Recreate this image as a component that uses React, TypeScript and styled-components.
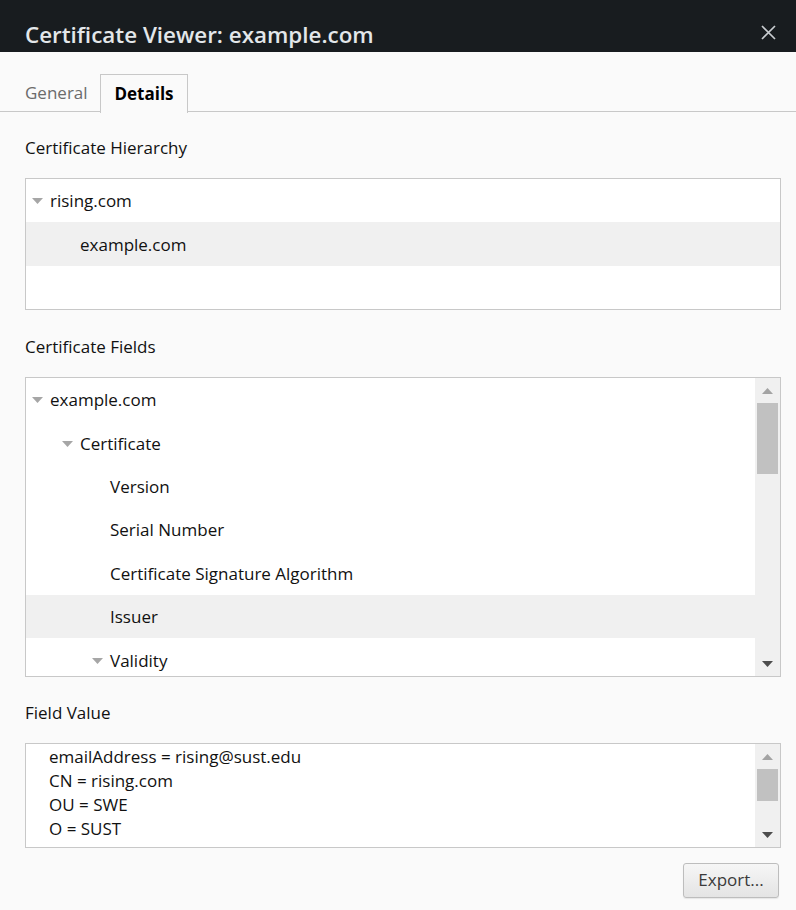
import styled, { createGlobalStyle } from 'styled-components';

const GlobalStyle = createGlobalStyle`
  html, body {
    margin: 0;
    padding: 0;
    background: #fafafa;
  }
  body {
    font-family: 'Open Sans', 'Noto Sans', sans-serif;
    color: #111;
  }
  * {
    box-sizing: border-box;
  }
`;

interface TreeItem {
  label: string;
  level: number;
  expanded?: boolean;
  selected?: boolean;
}

const hierarchy: TreeItem[] = [
  { label: 'rising.com', level: 0, expanded: true },
  { label: 'example.com', level: 1, selected: true },
];

const fields: TreeItem[] = [
  { label: 'example.com', level: 0, expanded: true },
  { label: 'Certificate', level: 1, expanded: true },
  { label: 'Version', level: 2 },
  { label: 'Serial Number', level: 2 },
  { label: 'Certificate Signature Algorithm', level: 2 },
  { label: 'Issuer', level: 2, selected: true },
  { label: 'Validity', level: 2, expanded: true },
];

const valueLines = [
  'emailAddress = rising@sust.edu',
  'CN = rising.com',
  'OU = SWE',
  'O = SUST',
  'L = Sylhet',
];

function Arrow({ up, color }: { up?: boolean; color: string }) {
  return (
    <svg width="11" height="6" viewBox="0 0 11 6">
      <path d={up ? 'M0 6 L5.5 0 L11 6 Z' : 'M0 0 L11 0 L5.5 6 Z'} fill={color} />
    </svg>
  );
}

function Tree({ items }: { items: TreeItem[] }) {
  return (
    <Rows>
      {items.map((item, i) => (
        <Row key={i} $level={item.level} $selected={item.selected}>
          <Twisty>{item.expanded && <Arrow color="#a6a6a6" />}</Twisty>
          {item.label}
        </Row>
      ))}
    </Rows>
  );
}

function Scrollbar({ thumb }: { thumb: number }) {
  return (
    <ScrollTrack>
      <ScrollButton>
        <Arrow up color="#a3a3a3" />
      </ScrollButton>
      <Thumb style={{ height: thumb }} />
      <ScrollSpacer />
      <ScrollButton>
        <Arrow color="#4d4d4d" />
      </ScrollButton>
    </ScrollTrack>
  );
}

export default function App() {
  return (
    <Dialog>
      <GlobalStyle />
      <TitleBar>
        <Title>Certificate Viewer: example.com</Title>
        <CloseButton aria-label="Close">
          <svg width="15" height="15" viewBox="0 0 15 15">
            <path d="M1 1 L14 14 M14 1 L1 14" stroke="#c9cdd1" strokeWidth="1.7" />
          </svg>
        </CloseButton>
      </TitleBar>

      <TabStrip>
        <Tab>General</Tab>
        <Tab $active>Details</Tab>
      </TabStrip>

      <Content>
        <SectionLabel $top={24}>Certificate Hierarchy</SectionLabel>
        <ListBox $height={132}>
          <Tree items={hierarchy} />
        </ListBox>

        <SectionLabel $top={25}>Certificate Fields</SectionLabel>
        <ListBox $height={300}>
          <Tree items={fields} />
          <Scrollbar thumb={71} />
        </ListBox>

        <SectionLabel $top={24}>Field Value</SectionLabel>
        <ListBox $height={105}>
          <ValueText>
            {valueLines.map((line) => (
              <ValueLine key={line}>{line}</ValueLine>
            ))}
          </ValueText>
          <Scrollbar thumb={32} />
        </ListBox>

        <Footer>
          <ExportButton>Export...</ExportButton>
        </Footer>
      </Content>
    </Dialog>
  );
}

const Dialog = styled.div`
  width: 796px;
  min-height: 910px;
  display: flex;
  flex-direction: column;
  background: #fafafa;
`;

const TitleBar = styled.header`
  height: 52px;
  background: #181c1f;
  display: flex;
  justify-content: space-between;
  align-items: flex-end;
  padding: 0 20px 0 25px;
`;

const Title = styled.h1`
  margin: 0;
  font-size: 22.4px;
  font-weight: 600;
  line-height: 30px;
  color: #e3e7ea;
  padding-bottom: 2px;
  white-space: nowrap;
`;

const CloseButton = styled.button`
  border: 0;
  background: none;
  padding: 0;
  width: 15px;
  height: 15px;
  margin-bottom: 12px;
  display: flex;
  cursor: pointer;
`;

const TabStrip = styled.nav`
  margin-top: 22px;
  height: 38px;
  padding-left: 25px;
  display: flex;
  border-bottom: 1px solid #c8c8c8;
`;

const Tab = styled.div<{ $active?: boolean }>`
  height: 38px;
  display: flex;
  align-items: center;
  font-size: 17px;
  padding: 0 0 2px;
  color: ${(p) => (p.$active ? '#000' : '#6b6b6b')};
  font-weight: ${(p) => (p.$active ? 700 : 400)};
  width: ${(p) => (p.$active ? '88px' : '75px')};
  justify-content: ${(p) => (p.$active ? 'center' : 'flex-start')};
  ${(p) =>
    p.$active &&
    `
    border: 1px solid #c8c8c8;
    border-bottom: 0;
    background: #fafafa;
    margin-bottom: -1px;
    height: 39px;
  `}
`;

const Content = styled.main`
  padding: 0 15px 0 25px;
  display: flex;
  flex-direction: column;
`;

const SectionLabel = styled.h2<{ $top: number }>`
  margin: ${(p) => p.$top}px 0 18px;
  font-size: 17px;
  font-weight: 400;
  line-height: 24px;
  color: #111;
`;

const ListBox = styled.div<{ $height: number }>`
  height: ${(p) => p.$height}px;
  border: 1px solid #c8c8c8;
  background: #fff;
  display: flex;
  overflow: hidden;
`;

const Rows = styled.div`
  flex: 1;
  display: flex;
  flex-direction: column;
  overflow: hidden;
`;

const Row = styled.div<{ $level: number; $selected?: boolean }>`
  flex: 0 0 43.4px;
  display: flex;
  align-items: center;
  gap: 7px;
  padding-left: ${(p) => 6 + p.$level * 30}px;
  font-size: 17px;
  color: #111;
  background: ${(p) => (p.$selected ? '#f0f0f0' : 'transparent')};
  white-space: nowrap;
`;

const Twisty = styled.span`
  width: 11px;
  height: 6px;
  display: flex;
  margin-top: 1px;
`;

const ScrollTrack = styled.div`
  width: 25px;
  background: #f0f0f0;
  display: flex;
  flex-direction: column;
  align-items: center;
`;

const ScrollButton = styled.div`
  height: 25px;
  width: 100%;
  display: flex;
  align-items: center;
  justify-content: center;
`;

const Thumb = styled.div`
  width: 21px;
  background: #c1c1c1;
`;

const ScrollSpacer = styled.div`
  flex: 1;
`;

const ValueText = styled.div`
  flex: 1;
  padding: 1px 0 0 23px;
  overflow: hidden;
`;

const ValueLine = styled.div`
  font-size: 17px;
  line-height: 24px;
  color: #111;
  white-space: nowrap;
`;

const Footer = styled.footer`
  display: flex;
  justify-content: flex-end;
  padding: 15px 2px 0 0;
`;

const ExportButton = styled.button`
  width: 96px;
  height: 35px;
  font-family: inherit;
  font-size: 17px;
  line-height: 24px;
  color: #3a3a3a;
  border: 1px solid #bdbdbd;
  border-radius: 3px;
  background: linear-gradient(#f6f6f6, #e4e4e4);
  box-shadow: 0 1px 1px rgba(0, 0, 0, 0.08);
  padding: 0 0 2px;
  cursor: pointer;
`;
